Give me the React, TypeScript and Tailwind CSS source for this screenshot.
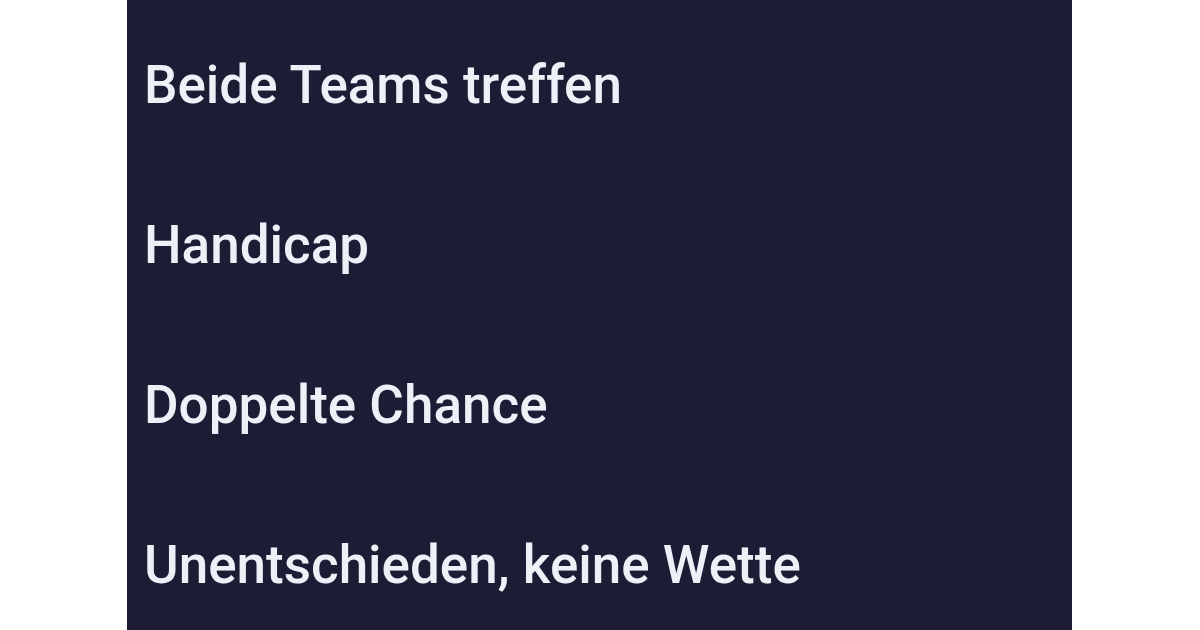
const markets = [
  "Beide Teams treffen",
  "Handicap",
  "Doppelte Chance",
  "Unentschieden, keine Wette",
];

export default function App() {
  return (
    <div className="flex h-[630px] w-[1200px] overflow-hidden bg-white">
      <div className="ml-[127px] flex w-[945px] flex-col bg-[#1c1c35] px-[17px] pt-[5px] font-['Roboto',sans-serif]">
        {markets.map((label) => (
          <div
            key={label}
            className="flex h-[160px] shrink-0 items-center text-[53px] font-medium leading-none text-[#eef0f8]"
          >
            {label}
          </div>
        ))}
      </div>
    </div>
  );
}
